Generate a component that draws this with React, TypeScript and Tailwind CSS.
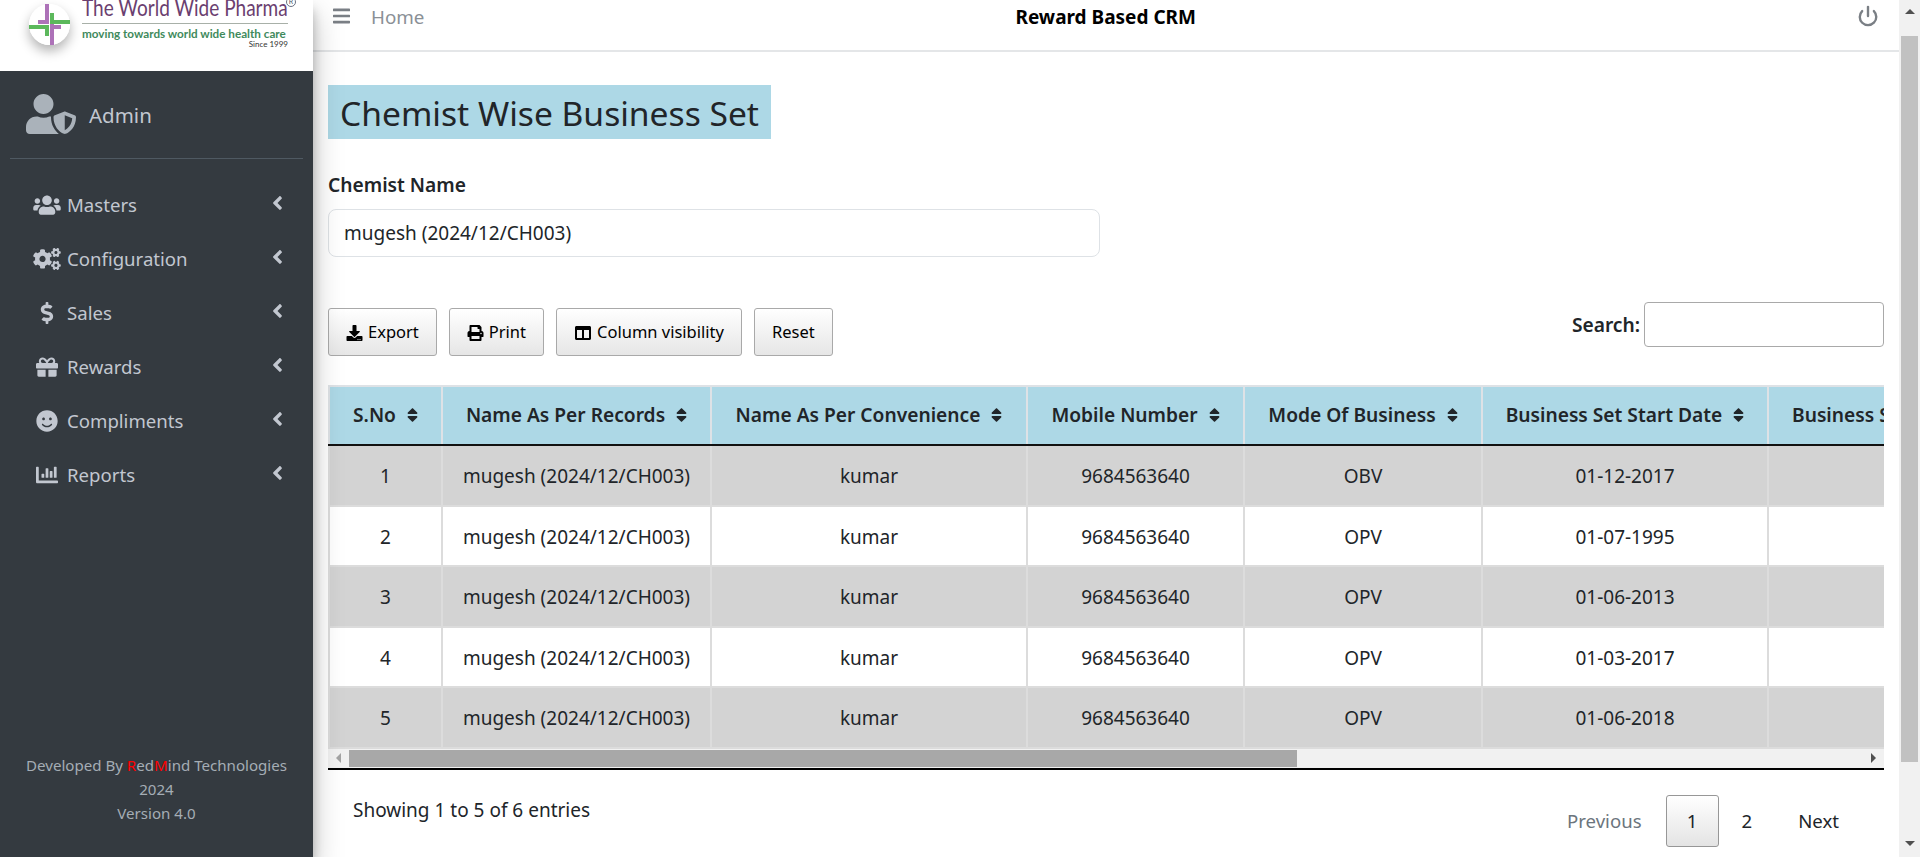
import type { ReactNode } from "react";
import {
  FaAngleLeft,
  FaBars,
  FaChartBar,
  FaColumns,
  FaDollarSign,
  FaDownload,
  FaGift,
  FaPrint,
  FaSmile,
  FaSort,
  FaUserShield,
  FaUsers,
  FaCogs,
} from "react-icons/fa";
import { Power } from "lucide-react";

const menu = [
  { label: "Masters", icon: <FaUsers className="w-7 h-[22px]" /> },
  { label: "Configuration", icon: <FaCogs className="w-7 h-[22px]" /> },
  { label: "Sales", icon: <FaDollarSign className="w-7 h-[22px]" /> },
  { label: "Rewards", icon: <FaGift className="w-7 h-[22px]" /> },
  { label: "Compliments", icon: <FaSmile className="w-7 h-[22px]" /> },
  { label: "Reports", icon: <FaChartBar className="w-7 h-[22px]" /> },
];

const columns = [
  { label: "S.No", width: "w-[113px]" },
  { label: "Name As Per Records", width: "w-[269px]" },
  { label: "Name As Per Convenience", width: "w-[316px]" },
  { label: "Mobile Number", width: "w-[217px]" },
  { label: "Mode Of Business", width: "w-[238px]" },
  { label: "Business Set Start Date", width: "w-[286px]" },
  { label: "Business Set End Date", width: "w-[276px]" },
];

const rows = [
  { no: 1, mode: "OBV", date: "01-12-2017" },
  { no: 2, mode: "OPV", date: "01-07-1995" },
  { no: 3, mode: "OPV", date: "01-06-2013" },
  { no: 4, mode: "OPV", date: "01-03-2017" },
  { no: 5, mode: "OPV", date: "01-06-2018" },
];

function Logo() {
  return (
    <div className="h-[71px] shrink-0 bg-white flex items-start overflow-hidden pl-[29px]">
      <div className="mt-1 rounded-full shadow-[0_6px_12px_rgba(0,0,0,0.3)] shrink-0">
        <svg width="41" height="41" viewBox="0 0 41 41" className="block">
          <circle cx="20.5" cy="20.5" r="20.5" fill="#fff" />
          <path d="M16 0h4v20h-4zM21 20h4v21h-4zM9 16h11v4H9zM21 21h11v4H21z" fill="#ad72b8" />
          <path d="M0 21h20v4H0zM21 16h20v4H21zM21 9h4v11h-4zM16 21h4v11h-4z" fill="#5cb85c" />
        </svg>
      </div>
      <div className="ml-[12px] w-[206px] relative">
        <div className="-mt-[4px] mb-[5px] font-['Lato',sans-serif] text-[23px] leading-[22px] text-[#6b3f70] whitespace-nowrap origin-left scale-x-[0.827]">
          The World Wide Pharma
        </div>
        <div className="absolute -right-[8px] -top-[3px] w-[10px] h-[10px] rounded-full border border-gray-500 text-[7px] leading-[8px] text-center text-gray-600">
          R
        </div>
        <div className="h-px bg-[#a8b0a8]" />
        <div className="mt-[2px] font-['Lato',sans-serif] font-bold text-[11.7px] leading-[14px] text-[#3f8a5c] whitespace-nowrap">
          moving towards world wide health care
        </div>
        <div className="text-right font-['Lato',sans-serif] text-[8px] leading-[9px] text-[#333]">Since 1999</div>
      </div>
    </div>
  );
}

function Sidebar() {
  return (
    <aside className="w-[313px] shrink-0 h-full flex flex-col bg-[#343a40] z-10 shadow-[0_14px_28px_rgba(0,0,0,0.25),0_10px_10px_rgba(0,0,0,0.22)]">
      <Logo />
      <div className="mx-[10px] h-[88px] border-b border-[#4f5962] flex items-center pl-4 shrink-0">
        <FaUserShield className="w-[50px] h-10 text-[#aab2ba] -mt-[2px]" />
        <span className="ml-[13px] text-[20.5px] text-[#c2c7d0] mt-[1px]">Admin</span>
      </div>
      <nav className="mt-[19px] flex flex-col">
        {menu.map((item) => (
          <div key={item.label} className="h-[54px] flex items-center pl-[33px] pr-[29px] text-[#c2c7d0]">
            {item.icon}
            <span className="ml-[6px] text-[18.6px]">{item.label}</span>
            <FaAngleLeft className="ml-auto w-[15px] h-[22px] -mt-[5px] -mr-[1px]" />
          </div>
        ))}
      </nav>
      <div className="mt-auto pb-[32px] text-center text-[15.1px] leading-[24px] text-[#a5adb5]">
        <div className="whitespace-nowrap">
          Developed By <span className="text-[#ff0000]">R</span>ed<span className="text-[#ff0000]">M</span>ind Technologies
        </div>
        <div>2024</div>
        <div>Version 4.0</div>
      </div>
    </aside>
  );
}

function ToolButton({ icon, children }: { icon?: ReactNode; children: ReactNode }) {
  return (
    <button className="h-[48px] px-[17px] pt-[1px] flex items-center gap-[5px] text-[16.5px] text-black rounded-[3px] border border-[#a9a9a9] bg-gradient-to-b from-white to-[#e6e6e6]">
      {icon}
      {children}
    </button>
  );
}

function DataTable() {
  return (
    <div className="mt-[29px] border-b-2 border-black overflow-hidden">
      <div className="overflow-hidden">
        <table className="table-fixed border-collapse w-[1715px] text-[19px] text-[#212529] text-center">
          <thead>
            <tr className="bg-[#add8e6] h-[59px]">
              {columns.map((col) => (
                <th key={col.label} className={`${col.width} border-2 border-[#dee2e6] border-b-[#111] font-semibold whitespace-nowrap text-[19.2px]`}>
                  <span className="inline-flex items-center gap-[11px]">
                    {col.label}
                    <FaSort className="w-[11px] h-[18px]" />
                  </span>
                </th>
              ))}
            </tr>
          </thead>
          <tbody>
            {rows.map((row) => (
              <tr key={row.no} className={row.no % 2 === 1 ? "bg-[#d3d3d3] h-[60.5px]" : "bg-white h-[60.5px]"}>
                <td className="border-2 border-[#dcdcdc] pt-[2px]">{row.no}</td>
                <td className="border-2 border-[#dcdcdc] pt-[2px] whitespace-nowrap">mugesh (2024/12/CH003)</td>
                <td className="border-2 border-[#dcdcdc] pt-[2px]">kumar</td>
                <td className="border-2 border-[#dcdcdc] pt-[2px]">9684563640</td>
                <td className="border-2 border-[#dcdcdc] pt-[2px]">{row.mode}</td>
                <td className="border-2 border-[#dcdcdc] pt-[2px]">{row.date}</td>
                <td className="border-2 border-[#dcdcdc]"></td>
              </tr>
            ))}
          </tbody>
        </table>
      </div>
      {/* horizontal scrollbar */}
      <div className="h-[19px] bg-[#f1f1f1] flex items-center">
        <div className="w-[21px] shrink-0 flex justify-center">
          <span className="w-0 h-0 border-y-[5px] border-y-transparent border-r-[5px] border-r-[#a3a3a3]" />
        </div>
        <div className="w-[948px] h-[17px] bg-[#a8a8a8]" />
        <div className="ml-auto w-[21px] flex justify-center">
          <span className="w-0 h-0 border-y-[5px] border-y-transparent border-l-[5px] border-l-[#505050]" />
        </div>
      </div>
    </div>
  );
}

function Scrollbar() {
  return (
    <div className="w-[21px] shrink-0 h-full bg-[#f1f1f1] flex flex-col items-center z-10">
      <div className="h-[36px] w-full flex justify-center pt-[9px]">
        <span className="w-0 h-0 border-x-[5px] border-x-transparent border-b-[5px] border-b-[#505050]" />
      </div>
      <div className="h-[726px] w-[17px] bg-[#c1c1c1]" />
      <div className="mt-auto h-[24px] w-full flex justify-center pt-[8px]">
        <span className="w-0 h-0 border-x-[5px] border-x-transparent border-t-[5px] border-t-[#505050]" />
      </div>
    </div>
  );
}

export default function App() {
  return (
    <div className="h-[857px] w-full flex overflow-hidden bg-white font-['Noto_Sans',sans-serif] text-[#212529]">
      <Sidebar />
      <main className="flex-1 min-w-0 flex flex-col">
        {/* Top bar */}
        <div className="h-[52px] shrink-0 border-b-2 border-[#e4e6e8] flex items-start pt-[3px] pl-[20px] pr-[20px]">
          <FaBars className="w-[17px] h-[20px] text-[#7a7f85] mt-[3px]" />
          <span className="ml-[21px] text-[18.8px] text-[#8a9096]">Home</span>
          <span className="flex-1 text-center text-[19px] font-bold text-black -ml-[70px]">Reward Based CRM</span>
          <Power className="w-[22px] h-[22px] text-[#7a7f85] mt-[2px]" strokeWidth={2.6} />
        </div>

        <div className="px-[15px] flex flex-col">
          <h1 className="mt-[33px] self-start h-[54px] px-[12px] bg-[#add8e6] text-[33.6px] leading-[56px] font-normal text-[#212529] whitespace-nowrap">
            Chemist Wise Business Set
          </h1>
          <label className="mt-[33px] text-[19.2px] font-semibold leading-[26px]">Chemist Name</label>
          <div className="mt-[11px] w-[772px] h-[48px] pt-[1px] border border-[#dee2e6] rounded-[8px] px-[15px] flex items-center text-[19px]">
            mugesh (2024/12/CH003)
          </div>

          <div className="mt-[45px] flex items-start justify-between">
            <div className="mt-[6px] flex gap-[12px]">
              <ToolButton icon={<FaDownload className="w-[17px] h-[16px]" />}>Export</ToolButton>
              <ToolButton icon={<FaPrint className="w-[17px] h-[16px]" />}>Print</ToolButton>
              <ToolButton icon={<FaColumns className="w-[18px] h-[16px]" />}>Column visibility</ToolButton>
              <ToolButton>Reset</ToolButton>
            </div>
            <div className="flex items-center gap-[4px]">
              <span className="text-[19.2px] font-semibold mt-[1px]">Search:</span>
              <div className="w-[240px] h-[45px] border border-[#a9a9a9] rounded-[4px]" />
            </div>
          </div>

          <DataTable />

          <div className="mt-[25px] flex items-start justify-between">
            <span className="ml-[25px] mt-[1px] text-[19px]">Showing 1 to 5 of 6 entries</span>
            <div className="flex items-center text-[18.6px] mr-[45px]">
              <span className="text-[#6c757d] mr-[24px]">Previous</span>
              <span className="w-[53px] h-[52px] flex items-center justify-center rounded-[3px] border border-[#979797] bg-gradient-to-b from-white to-[#e4e4e4]">
                1
              </span>
              <span className="ml-[23px]">2</span>
              <span className="ml-[46px]">Next</span>
            </div>
          </div>
        </div>
      </main>
      <Scrollbar />
    </div>
  );
}
